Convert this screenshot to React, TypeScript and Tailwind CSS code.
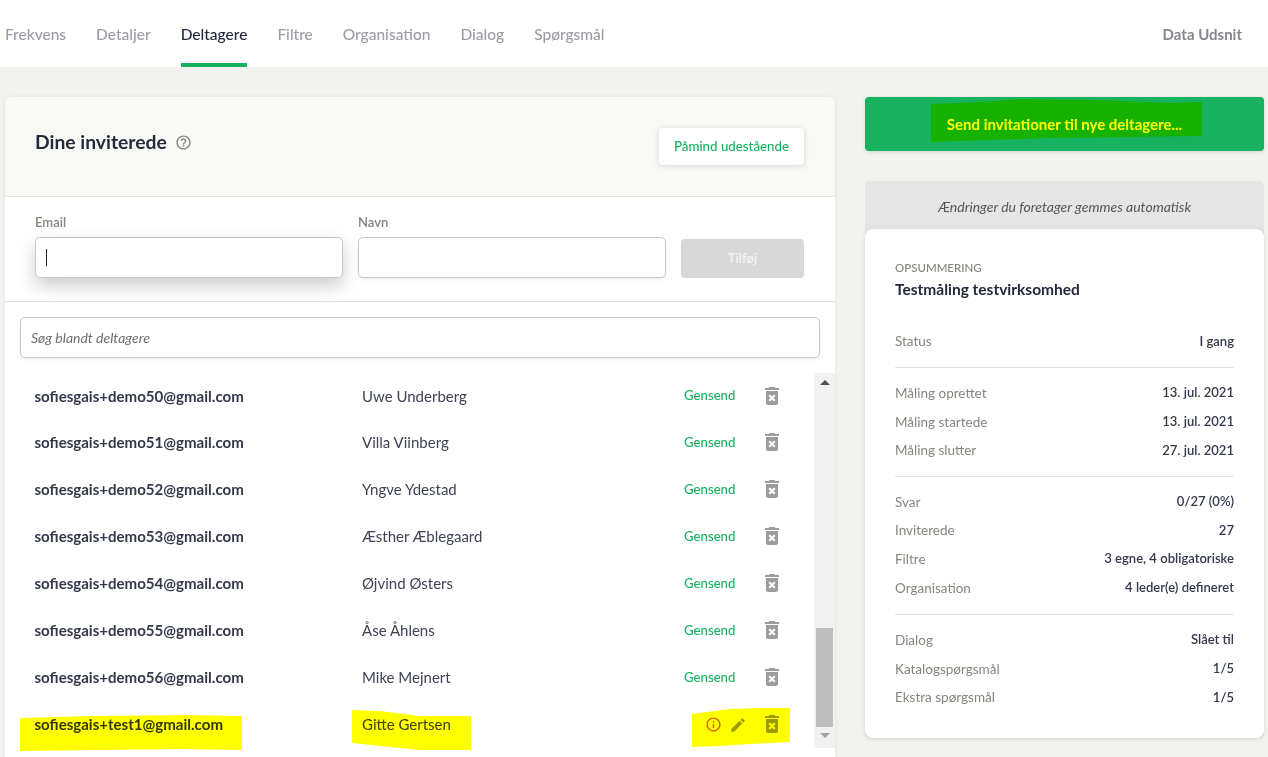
import { MdDeleteForever, MdEdit, MdHelpOutline, MdInfoOutline } from "react-icons/md";

const tabs = ["Frekvens", "Detaljer", "Deltagere", "Filtre", "Organisation", "Dialog", "Spørgsmål"];

const participants = [
  { email: "sofiesgais+demo50@gmail.com", name: "Uwe Underberg" },
  { email: "sofiesgais+demo51@gmail.com", name: "Villa Viinberg" },
  { email: "sofiesgais+demo52@gmail.com", name: "Yngve Ydestad" },
  { email: "sofiesgais+demo53@gmail.com", name: "Æsther Æblegaard" },
  { email: "sofiesgais+demo54@gmail.com", name: "Øjvind Østers" },
  { email: "sofiesgais+demo55@gmail.com", name: "Åse Åhlens" },
  { email: "sofiesgais+demo56@gmail.com", name: "Mike Mejnert" },
];

const summary = [
  [["Status", "I gang"]],
  [
    ["Måling oprettet", "13. jul. 2021"],
    ["Måling startede", "13. jul. 2021"],
    ["Måling slutter", "27. jul. 2021"],
  ],
  [
    ["Svar", "0/27 (0%)"],
    ["Inviterede", "27"],
    ["Filtre", "3 egne, 4 obligatoriske"],
    ["Organisation", "4 leder(e) defineret"],
  ],
  [
    ["Dialog", "Slået til"],
    ["Katalogspørgsmål", "1/5"],
    ["Ekstra spørgsmål", "1/5"],
  ],
];

const groupClasses = [
  "mb-[10.5px] border-b border-[#e3e3e3] pb-[11.5px]",
  "mb-[10.5px] border-b border-[#e3e3e3] pb-[11.5px]",
  "mb-[11px] border-b border-[#e3e3e3] pb-[11.5px]",
  "",
];

// marker strokes someone drew on top of the screenshot
const highlights = [
  "931,104 980,102 1020,99 1100,100 1170,103 1202,102 1202,136 1130,137 1050,138 990,140 931,142",
  "20,718 90,716 190,715 242,716 242,750 180,749 100,750 20,751",
  "352,710 380,711 420,716 471,716 471,750 420,750 380,746 352,743",
  "692,714 730,709 760,708 790,708 790,742 750,744 720,746 692,747",
];

const App = () => {
  return (
    <div className="relative h-[757px] w-[1268px] overflow-hidden bg-[#f2f2ef] font-['Lato',sans-serif] text-[#2b3044]">
      <header className="flex h-[67px] items-stretch justify-between bg-white pl-[5px] pr-[26px]">
        <nav className="flex gap-[30px]">
          {tabs.map((tab) => (
            <div
              key={tab}
              className={`flex items-center border-b-[4px] pt-[6px] text-[15.5px] font-medium ${
                tab === "Deltagere" ? "border-[#17b25f] font-bold text-[#232a3d]" : "border-transparent text-[#9a9da3]"
              }`}
            >
              {tab}
            </div>
          ))}
        </nav>
        <div className="flex items-center pt-[1px] text-[15px] font-bold text-[#85878c]">Data Udsnit</div>
      </header>

      <main className="flex items-start gap-[30px] pl-[5px] pt-[30px]">
        <section className="h-[700px] w-[830px] shrink-0 rounded-t-[5px] bg-white shadow-[0_0_4px_rgba(0,0,0,0.08)]">
          <div className="flex h-[100px] items-start justify-between rounded-t-[5px] border-b border-[#e3e3e3] bg-[#f8f8f5] pl-[30px] pr-[31px]">
            <h1 className="mt-[33px] flex items-center gap-[8px] text-[19.3px] font-bold leading-[24px] text-[#232a3d]">
              Dine inviterede
              <MdHelpOutline className="text-[#85857e]" size={17} />
            </h1>
            <button className="mt-[31px] h-[37px] w-[145px] rounded-[4px] bg-white text-[13.3px] font-medium text-[#17b25f] shadow-[0_1px_6px_rgba(0,0,0,0.14)]">
              Påmind udestående
            </button>
          </div>

          <div className="flex h-[105px] items-start border-b border-[#e3e3e3] pl-[30px] pt-[17px]">
            <label className="mr-[15px] block w-[308px]">
              <span className="block text-[13px] font-semibold leading-[16px] text-[#85857e]">Email</span>
              <div className="mt-[7px] flex h-[41px] items-center rounded-[5px] border border-[#c8c8c8] bg-white pl-[10px] shadow-[0_8px_18px_rgba(0,0,0,0.2)]">
                <div className="h-[17px] w-px bg-[#222]" />
              </div>
            </label>
            <label className="mr-[15px] block w-[308px]">
              <span className="block text-[13px] font-semibold leading-[16px] text-[#85857e]">Navn</span>
              <div className="mt-[7px] h-[41px] rounded-[5px] border border-[#c8c8c8] bg-white shadow-[0_2px_3px_rgba(0,0,0,0.05)]" />
            </label>
            <button className="mt-[25px] h-[39px] w-[123px] rounded-[4px] bg-[#d8d8d8] text-[13px] font-bold text-[#f1f1f1]">
              Tilføj
            </button>
          </div>

          <div className="px-[15px] pt-[15px]">
            <div className="flex h-[41px] items-center rounded-[5px] border border-[#c8c8c8] bg-white pb-[1px] pl-[10px] text-[14px] italic text-[#6f6f6f] shadow-[0_2px_3px_rgba(0,0,0,0.05)]">
              Søg blandt deltagere
            </div>
          </div>

          <div className="mt-[15px] flex h-[375px]">
            <div className="-mt-[1px] w-[809px]">
              {participants.map((p, i) => (
                <div key={p.email} className={`flex h-[47px] items-center pl-[29.5px] text-[15px] ${i === 0 ? "pt-[1px]" : ""}`}>
                  <div className="w-[327.5px] text-[15.07px] font-bold text-[#33384a]">{p.email}</div>
                  <div className="w-[322px] text-[#3f4354]">{p.name}</div>
                  <div className="w-[76px] text-[13.2px] font-medium text-[#17b25f]">Gensend</div>
                  <MdDeleteForever className="-mt-[1px] text-[#9c9ca0]" size={24} />
                </div>
              ))}
              <div className="flex h-[47px] items-center pl-[29.5px] text-[15px]">
                <div className="w-[327.5px] text-[15.07px] font-bold text-[#33384a]">sofiesgais+test1@gmail.com</div>
                <div className="w-[322px] text-[#3f4354]">Gitte Gertsen</div>
                <div className="flex w-[76px] items-center gap-[7px] pl-[21px]">
                  <MdInfoOutline className="shrink-0 text-[#e8590c]" size={17} />
                  <MdEdit className="shrink-0 text-[#9c9ca0]" size={18} />
                </div>
                <MdDeleteForever className="-mt-[1px] text-[#9c9ca0]" size={24} />
              </div>
            </div>
            <div className="flex w-[21px] flex-col items-center bg-[#f1f1f1]">
              <div className="mt-[7px] h-0 w-0 border-x-[5px] border-b-[5px] border-x-transparent border-b-[#505050]" />
              <div className="mt-[243px] h-[99px] w-[17px] bg-[#bdbdbd]" />
              <div className="mt-[6px] h-0 w-0 border-x-[5px] border-t-[5px] border-x-transparent border-t-[#a3a3a3]" />
            </div>
          </div>
        </section>

        <aside className="w-[399px] shrink-0">
          <button className="h-[54px] w-full rounded-[4px] bg-[#17b25f] text-[15px] font-bold text-white shadow-[0_1px_4px_rgba(0,0,0,0.12)]">
            Send invitationer til nye deltagere...
          </button>
          <div className="mt-[30px] rounded-[5px] bg-[#e5e5e5]">
            <div className="flex h-[48px] items-center justify-center pt-[3px] text-[14px] italic text-[#55565a]">
              Ændringer du foretager gemmes automatisk
            </div>
            <div className="h-[509px] rounded-[8px] bg-white px-[30px] pt-[31px] shadow-[0_1px_5px_rgba(0,0,0,0.12)]">
              <div className="text-[11.5px] font-medium leading-[15px] text-[#85857e]">OPSUMMERING</div>
              <div className="mt-[4px] text-[15.5px] font-bold leading-[20px] text-[#232a3d]">Testmåling testvirksomhed</div>
              <div className="mt-[28px]">
                {summary.map((group, i) => (
                  <div key={i} className={groupClasses[i]}>
                    {group.map(([label, value]) => (
                      <div key={label} className="flex h-[28.67px] items-center justify-between text-[13.5px]">
                        <span className="text-[#85857e]">{label}</span>
                        <span className="text-[13.05px] font-semibold text-[#33384a]">{value}</span>
                      </div>
                    ))}
                  </div>
                ))}
              </div>
            </div>
          </div>
        </aside>
      </main>

      <svg className="pointer-events-none absolute left-0 top-0 mix-blend-multiply" width="1268" height="757" viewBox="0 0 1268 757">
        {highlights.map((points) => (
          <polygon key={points} points={points} fill="#ffff00" />
        ))}
      </svg>
    </div>
  );
};

export default App;
